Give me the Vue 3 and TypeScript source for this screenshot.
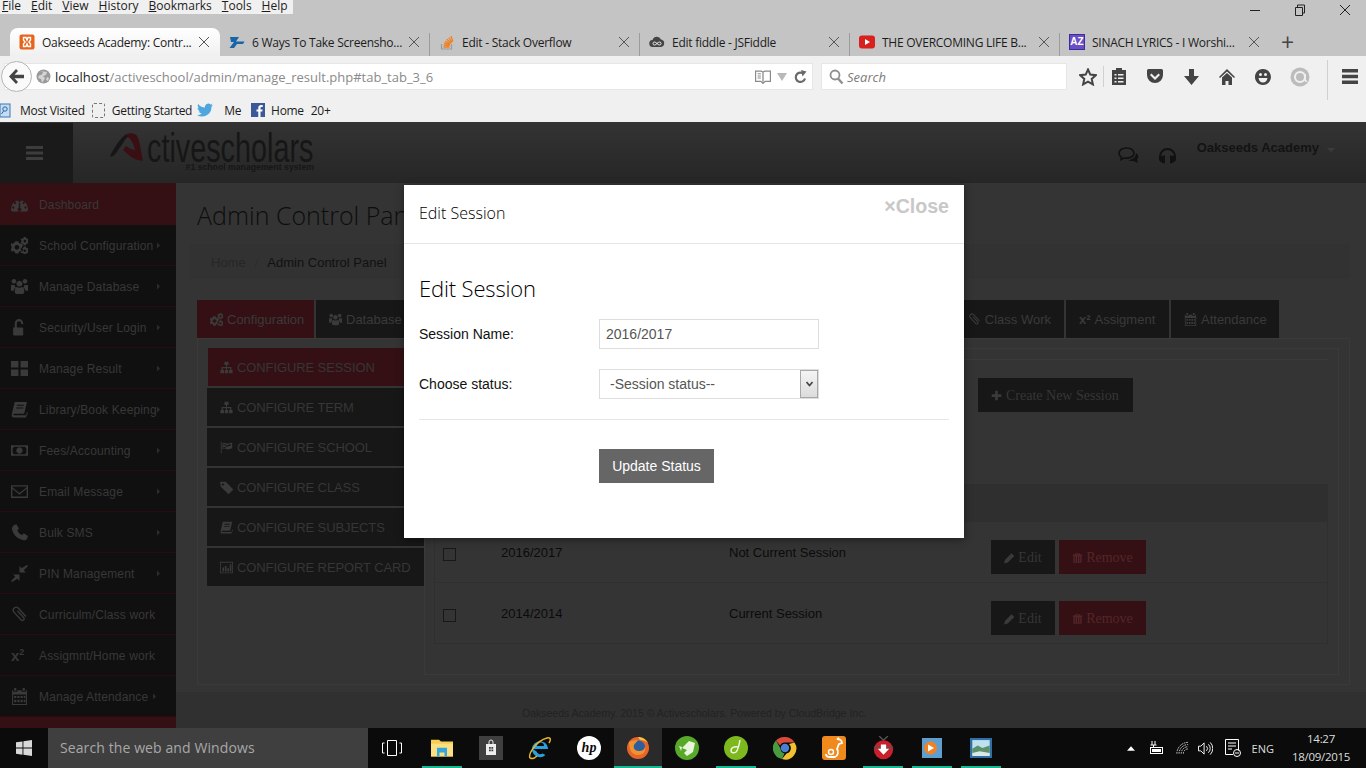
<script setup lang="ts">
const menus = ['File', 'Edit', 'View', 'History', 'Bookmarks', 'Tools', 'Help']

const tabs = [
  { id: 'xampp', title: 'Oakseeds Academy: Contr...', active: true },
  { id: 'zd', title: '6 Ways To Take Screensho...' },
  { id: 'so', title: 'Edit - Stack Overflow' },
  { id: 'fiddle', title: 'Edit fiddle - JSFiddle' },
  { id: 'yt', title: 'THE OVERCOMING LIFE B...' },
  { id: 'az', title: 'SINACH LYRICS - I Worshi...' },
]

// Font Awesome look-alikes on a 16 unit box
const icons: Record<string, string> = {
  gauge: 'M0 12a8 8 0 1 1 16 0c0 1-.3 1.500-.8 2.500H.8C.3 13.500 0 13 0 12zM3.200 10.800a1.100 1.100 0 1 0 0 .1zM5 6.600a1.100 1.100 0 1 0 0 .1zM9 5a1.100 1.100 0 1 0 0 .1zM13 6.600a1.100 1.100 0 1 0 0 .1zM14.800 10.800a1.100 1.100 0 1 0 0 .1zM7.300 6.500v4.600a1.700 1.700 0 1 0 1.400 0V6.500z',
  cogs: 'M4 4h3l.4 1.600 1.400.8 1.600-.5 1.200 2-1.200 1.100v1.600l1.200 1.100-1.200 2-1.600-.5-1.400.8L7 15.600H4l-.4-1.600-1.400-.8-1.600.5-1.200-2 1.200-1.100V9L-1.200 7.900l1.200-2 1.600.5L3 5.600zM5.500 7.600a2.200 2.200 0 1 0 .1 0zM12 0h2l.3 1.100 1 .5 1-.3.700 1.400-.8.7v1l.8.700-.7 1.400-1-.3-1 .5L14 7.800h-2l-.3-1.100-1-.5-1 .3-.7-1.400.8-.7v-1l-.8-.7.7-1.400 1 .3 1-.5zM13 2.700a1.200 1.200 0 1 0 .1 0zM12 9h2l.3 1 1 .5 1-.3.700 1.400-.8.7v1l.8.700-.7 1.400-1-.3-1 .5-.3 1h-2l-.3-1-1-.5-1 .3-.7-1.400.8-.7v-1l-.8-.7.7-1.400 1 .3 1-.5zM13 11.700a1.200 1.200 0 1 0 .1 0z',
  users: 'M8 2.500a2.800 2.800 0 1 1-.1 0zM2.800 1a2.200 2.200 0 1 1-.1 0zM13.200 1a2.200 2.200 0 1 1-.1 0zM0 6.500h3.500a4 4 0 0 0 1 2.500A4 4 0 0 0 2.500 12H0zM16 6.500h-3.500a4 4 0 0 1-1 2.500 4 4 0 0 1 2 3H16zM5.500 8.500c1.500 1 3.500 1 5 0 1.500.5 2 2 2 4.500 0 1-.5 2-2 2h-5c-1.500 0-2-1-2-2 0-2.500.5-4 2-4.500z',
  unlock: 'M2 8h1.500V4a4 4 0 0 1 8 0v1H9.500V4a2 2 0 0 0-4 0v4h5a1 1 0 0 1 1 1v5.500a1 1 0 0 1-1 1H3a1 1 0 0 1-1-1z',
  grid: 'M0 1h7v6H0zM9 1h7v6H9zM0 9h7v6H0zM9 9h7v6H9z',
  book: 'M3.500 1H15l-2.600 11H2.800c-.8 0-.8 1.500 0 1.500h11.400l.8-3 1 .5L14 15.500H2.500C1 15.500.400 14 .7 12.500zM5.500 3.500v1h6.500v-1zM5 6v1h6.500V6z',
  money: 'M0 3h16v10H0zM2.500 4.500a2 2 0 0 1-1 1.500v4a2 2 0 0 1 1 1.500h11a2 2 0 0 1 1-1.500V6a2 2 0 0 1-1-1.500zM8 5a3 3 0 1 1-.1 0z',
  mail: 'M0 2h16v12H0zM1.300 3.300v.6L8 9.300l6.700-5.400v-.6zM1.300 5.500v7.200h13.400V5.500L8 11z',
  phone: 'M3 1l2-.7 2.500 4-1.500 1.500c.5 2 2.500 4 4.500 4.500l1.500-1.500 4 2.500-.7 2C14.500 15 13 15.500 11 15 6 14 2 10 1 5 .6 3.500 1.500 2 3 1z',
  compress: 'M15 0l1 1-4 4 2 2H8V1l2 2zM1 16l-1-1 4-4-2-2h6v6l-2-2z',
  clip: 'M6 4.500L12 11a1.600 1.600 0 0 1-2.400 2.100L2.800 5.800A2.800 2.800 0 0 1 7 2.100L14 9.800',
  calendar: 'M3 0h2v2.500H3zM11 0h2v2.500h-2zM1 2h1v1.500h4V2h4v1.500h4V2h1v14H1zM2 6v9h12V6zM3 7.500h2v2H3zM6 7.500h2v2H6zM9 7.500h2v2H9zM12 7.500h1.500v2H12zM3 11h2v2.500H3zM6 11h2v2.500H6zM9 11h2v2.500H9zM12 11h1.500v2.500H12z',
  sitemap: 'M5.500 1h5v4H8.600v2.500H14V11h1.500v4h-4.500v-4h1.500V8.800H8.600V11H10v4H6v-4h1.400V8.800H3.500V11H5v4H.5v-4H2V7.500h5.400V5H5.500z',
  flag: 'M1 1h1v14H1zM3 3c3-1.500 5 1 8 0s3-1 4-.5v7c-1-.5-2 0-4 .7s-5-1.700-8-.2zM4 4v1.500c1-.3 2-.3 3 0V4zM10 5c-1 .4-2 .4-3 0v1.800c1 .4 2 .4 3 0zM4 7.500V9c1-.3 2-.3 3 0V7.500zM13.500 4c-1-.2-2 .3-3.500.7v1.800c1.500-.4 2.500-.9 3.500-.7z',
  tag: 'M0 1h7l8.500 8.500a1.400 1.400 0 0 1 0 2l-4 4a1.400 1.400 0 0 1-2 0L1 7zM3.500 3a1.300 1.300 0 1 0 .1 0z',
  chart: 'M0 1h16v14H0zM1 2v12h14V2zM3 8h2v5H3zM6 6h2v7H6zM9 9h2v4H9zM12 4h2v9h-2z',
  plus: 'M6 1h4v5h5v4h-5v5H6v-5H1V6h5z',
  pencil: 'M11 1l4 4-9.500 9.500L0 16l1.500-5.500z',
  trash: 'M5 1h6l1 2h3v1.500h-1V15H2V4.500H1V3h3zM6 3h4l-.4-.8H6.400zM4 5.500V14h1.200V5.500zM7.400 5.500V14h1.200V5.500zM10.800 5.500V14H12V5.500z',
}

const sideItems = [
  { label: 'Dashboard', icon: 'gauge', active: true },
  { label: 'School Configuration', icon: 'cogs', caret: true },
  { label: 'Manage Database', icon: 'users', caret: true },
  { label: 'Security/User Login', icon: 'unlock', caret: true },
  { label: 'Manage Result', icon: 'grid', caret: true },
  { label: 'Library/Book Keeping', icon: 'book', caret: true },
  { label: 'Fees/Accounting', icon: 'money', caret: true },
  { label: 'Email Message', icon: 'mail', caret: true },
  { label: 'Bulk SMS', icon: 'phone', caret: true },
  { label: 'PIN Management', icon: 'compress', caret: true },
  { label: 'Curriculm/Class work', icon: 'clip' },
  { label: 'Assigmnt/Home work', icon: 'sup' },
  { label: 'Manage Attendance', icon: 'calendar', caret: true, near: true },
]

const pills = [
  { label: 'CONFIGURE SESSION', icon: 'sitemap', active: true },
  { label: 'CONFIGURE TERM', icon: 'sitemap' },
  { label: 'CONFIGURE SCHOOL', icon: 'flag' },
  { label: 'CONFIGURE CLASS', icon: 'tag' },
  { label: 'CONFIGURE SUBJECTS', icon: 'book' },
  { label: 'CONFIGURE REPORT CARD', icon: 'chart' },
]

const sessions = [
  { name: '2016/2017', status: 'Not Current Session' },
  { name: '2014/2014', status: 'Current Session' },
]

const taskApps = [
  { id: 'folder', on: true },
  { id: 'store' },
  { id: 'ie' },
  { id: 'hp' },
  { id: 'firefox', on: true, current: true },
  { id: 'evernote' },
  { id: 'dw', on: true },
  { id: 'chrome' },
  { id: 'uc' },
  { id: 'ball', on: true },
  { id: 'player', on: true },
  { id: 'photo', on: true },
]
</script>

<template>
  <div class="screen">
    <!-- browser chrome -->
    <header class="browser">
      <div class="titlebar">
        <div class="menus">
          <span v-for="m in menus" :key="m">{{ m }}</span>
        </div>
        <div class="win-btns">
          <svg width="12" height="12" viewBox="0 0 12 12"><path d="M1 6.500h10" stroke="#222" /></svg>
          <svg width="12" height="12" viewBox="0 0 12 12"><path d="M1.500 3.500h7v8h-7zM3.500 3.500v-2.500h7v8h-2" fill="none" stroke="#222" /></svg>
          <svg width="12" height="12" viewBox="0 0 12 12"><path d="M1 1l10 10M11 1L1 11" stroke="#222" /></svg>
        </div>
      </div>
      <div class="tabstrip">
        <div v-for="t in tabs" :key="t.id" class="tab" :class="{ 'tab-active': t.active }">
          <svg v-if="t.id === 'xampp'" class="fav" viewBox="0 0 16 16">
            <rect x="0.500" y="0.500" width="15" height="15" rx="2" fill="#e8641b" />
            <path d="M4.500 3.500h2.500l1 2.500 1-2.500h2.500v2.500L10 8l1.500 2v2.500H9l-1-2.500-1 2.500H4.500V10L6 8 4.500 6z" fill="none" stroke="#fff" stroke-width="1.400" />
          </svg>
          <svg v-else-if="t.id === 'zd'" class="fav" viewBox="0 0 16 16">
            <path d="M1 3h9L7 7.500h8.500L14 10H8l-3 4H.5L5 8H2z" fill="#1565a8" />
          </svg>
          <svg v-else-if="t.id === 'so'" class="fav" viewBox="0 0 16 16">
            <path d="M2.500 10v5h10v-5" fill="none" stroke="#9b9b9b" stroke-width="1.200" />
            <path d="M4.500 13h6M4.700 11l6 .6M5.200 9l5.800 1.500M6.200 7l5.200 2.800M7.700 5.200l4.500 3.800M9.700 3.500l3.300 4.800M12 2l1.800 5.500" stroke="#f08020" stroke-width="1.300" />
          </svg>
          <svg v-else-if="t.id === 'fiddle'" class="fav" viewBox="0 0 16 16">
            <path d="M4 13a3.500 3.500 0 0 1-.5-7A4.500 4.500 0 0 1 12 5.500 3.800 3.800 0 0 1 12 13z" fill="#444" />
            <path d="M5.500 8a1.500 1.500 0 1 0 0 3c2 0 3-3 5-3a1.500 1.500 0 1 1 0 3c-2 0-3-3-5-3z" fill="none" stroke="#eee" />
          </svg>
          <svg v-else-if="t.id === 'yt'" class="fav" viewBox="0 0 16 16">
            <rect x="0" y="1.500" width="16" height="13" rx="3" fill="#d8201f" />
            <path d="M6 5l5 3-5 3z" fill="#fff" />
          </svg>
          <span v-else class="fav fav-az">AZ</span>
          <span class="tab-title">{{ t.title }}</span>
          <svg class="tab-x" viewBox="0 0 12 12"><path d="M1 1l10 10M11 1L1 11" stroke="#555" /></svg>
        </div>
        <span class="new-tab">+</span>
      </div>
      <div class="navbar">
        <span class="back">
          <svg width="17" height="15" viewBox="0 0 17 15"><path d="M8 0L1 7.500 8 15l2-2-3.500-3.700H16V5.700H6.500L10 2z" fill="#444" /></svg>
        </span>
        <div class="urlbar">
          <svg class="globe" width="15" height="15" viewBox="0 0 15 15">
            <circle cx="7.500" cy="7.500" r="7" fill="#9a9a9a" />
            <path d="M4 2l3 1-1 2.500-3 1L2 9l3 1 1 4 2-3 1-2-2-2 3-1 1-3zM11 8l2 1-1 3-2-1z" fill="#d4d4d4" />
          </svg>
          <span class="url"><b>localhost</b>/activeschool/admin/manage_result.php#tab_tab_3_6</span>
          <svg width="16" height="14" viewBox="0 0 15 13" class="reader">
            <path d="M.5 1h5.500l1.500 1L9 1h5.500v9.500H9.500l-2 2-2-2H.5zM7.500 2v9" fill="none" stroke="#8a8a8a" stroke-width="1.200" />
            <path d="M2.500 3.500h3M2.500 5.500h3M2.500 7.500h3" stroke="#8a8a8a" />
          </svg>
          <svg width="10" height="8" viewBox="0 0 10 8" class="drop"><path d="M0 0h10L5 8z" fill="#b9b9b9" /></svg>
          <svg width="13" height="14" viewBox="0 0 13 14" class="reload">
            <path d="M11 8.500A4.700 4.700 0 1 1 8.500 3" fill="none" stroke="#6a6a6a" stroke-width="2.200" />
            <path d="M7 0l5.500 1.500L8.500 6.500z" fill="#6a6a6a" />
          </svg>
        </div>
        <div class="searchbar">
          <svg width="15" height="16" viewBox="0 0 15 16"><circle cx="6" cy="6" r="4.500" fill="none" stroke="#8e8e8e" stroke-width="1.800" /><path d="M9 9.500l4.500 5" stroke="#8e8e8e" stroke-width="2.400" /></svg>
          <span>Search</span>
        </div>
        <div class="tools">
          <svg class="t-star" width="18" height="18" viewBox="0 0 18 18"><path d="M9 1.500l2.300 5.100 5.500.6-4.100 3.700 1.200 5.500L9 13.600l-4.900 2.800 1.200-5.500L1.200 7.200l5.500-.6z" fill="none" stroke="#444" stroke-width="2" /></svg>
          <i class="t-sep" />
          <svg class="t-clip" width="14" height="17" viewBox="0 0 14 17"><path d="M0 2h4V0h6v2h4v15H0zM2.500 6v1.500h2V6zM6 6v1.500h5.500V6zM2.500 9.500V11h2V9.500zM6 9.500V11h5.500V9.500zM2.500 13v1.500h2V13zM6 13v1.500h5.500V13z" fill="#444" fill-rule="evenodd" /></svg>
          <svg class="t-pocket" width="16" height="15" viewBox="0 0 16 15"><path d="M1.500 0h13A1.500 1.500 0 0 1 16 1.500V6A8 8 0 0 1 0 6V1.500A1.500 1.500 0 0 1 1.500 0zM4.500 4.500L3 6l5 5 5-5-1.500-1.500L8 8z" fill="#444" fill-rule="evenodd" /></svg>
          <svg class="t-down" width="15" height="16" viewBox="0 0 15 16"><path d="M5 0h5v7h5l-7.500 9L0 7h5z" fill="#444" /></svg>
          <svg class="t-home" width="16" height="16" viewBox="0 0 16 16"><path d="M8 0l8 8-1 1-7-6.500L1 9 0 8zM3 8.500l5-4.500 5 4.500V16H9.500v-4h-3v4H3z" fill="#444" /></svg>
          <svg class="t-smile" width="16" height="16" viewBox="0 0 16 16"><path d="M8 0a8 8 0 1 1-.1 0zM4 5.500a1.500 1.500 0 1 0 3 0 1.500 1.500 0 1 0-3 0zM9 5.500a1.500 1.500 0 1 0 3 0 1.500 1.500 0 1 0-3 0zM3.500 9c.5 3 2.300 4.500 4.500 4.500S12 12 12.500 9z" fill="#444" fill-rule="evenodd" /></svg>
          <svg class="t-at" width="20" height="20" viewBox="0 0 20 20"><circle cx="10" cy="10" r="9.500" fill="#bcbcbc" /><circle cx="10" cy="10" r="5" fill="none" stroke="#f0f0f0" stroke-width="2" /><path d="M15 7v5c0 2 1 2.500 2 2" fill="none" stroke="#f0f0f0" stroke-width="1.600" /></svg>
          <i class="t-sep t-sep-tall" />
          <svg class="t-menu" width="16" height="15" viewBox="0 0 16 15"><path d="M0 0h16v3.500H0zM0 5.700h16v3.500H0zM0 11.400h16v3.500H0z" fill="#444" /></svg>
        </div>
      </div>
      <div class="bookmarks">
        <svg class="bm-first" width="11" height="15" viewBox="0 0 11 15"><rect x="0" y="1" width="10" height="13" fill="#c6dcf2" stroke="#3a78b5" /><circle cx="5" cy="6" r="2.200" fill="none" stroke="#2a68a5" /><path d="M3.500 8l-2 3" stroke="#2a68a5" /></svg>
        <span class="bm-text">Most Visited</span>
        <span class="dashed" />
        <span class="bm-text">Getting Started</span>
        <svg class="bird" width="16" height="14" viewBox="0 0 16 14"><path d="M16 2l-1.900.5L15.500.6 13.600 1.500A3.300 3.300 0 0 0 8 4.500C5 4.300 2.800 3 1.200.9.300 2.500.800 4.300 2 5.300L.6 4.900c0 1.600 1 2.900 2.600 3.300H1.800c.4 1.300 1.600 2.200 3 2.300A6.600 6.600 0 0 1 0 12a9.500 9.500 0 0 0 14.500-8.300z" fill="#4da7de" /></svg>
        <span class="bm-text bm-me">Me</span>
        <svg class="fb" width="14" height="14" viewBox="0 0 14 14"><rect width="14" height="14" fill="#3b5998" /><path d="M9.500 14V8.500h1.800l.3-2.100H9.500V5c0-.6.200-1 1-1h1.200V2.100C11.300 2 10.800 2 10.200 2 8.500 2 7.300 3 7.300 4.800v1.600H5.500v2.100h1.800V14z" fill="#fff" /></svg>
        <span class="bm-text bm-home">Home</span>
        <span class="bm-text bm-more">20+</span>
      </div>
    </header>

    <!-- dimmed page -->
    <div class="page">
      <div class="topbar">
        <div class="burger">
          <svg width="17" height="14" viewBox="0 0 17 14"><path d="M0 0h17v3H0zM0 5.500h17v3H0zM0 11h17v3H0z" fill="#3d3d3d" /></svg>
        </div>
        <div class="logo">
          <svg class="logo-a" width="37" height="30" viewBox="0 0 37 30">
            <path d="M0 23C4 15 10 6 15 2c2-1 5-1.500 8-1.500-5 2-8 6-10 9.500L6 20c-2 3-4 4-6 3z" fill="#161616" />
            <path d="M15 2c5-2 10-2 12 1 2 3 3 8 4 15l2 10c-3-.5-7-1-10-3-4-2-7-6-10-8l3-4c3 2 6 4 9 4-1-6-4-12-10-15z" fill="#3a0f13" />
          </svg>
          <div class="logo-text">
            <span class="logo-name">ctivescholars</span>
            <span class="logo-sub">#1 school management system</span>
          </div>
        </div>
        <div class="top-right">
          <svg class="top-chat" width="22" height="17" viewBox="0 0 22 17"><path d="M8.500 1C4 1 1 3.300 1 6.200c0 1.700 1 3 2.500 4L3 12.500l3-1.500c4.500.7 10-1 10-4.800C16 3.300 13 1 8.500 1z" fill="none" stroke="#111" stroke-width="1.600" /><path d="M18 6c2.500 1.500 3 4.500 1 6.500l1 3.500-4.500-2c-2 .4-4 0-5.500-1 3.500 0 8-2 8-7z" fill="#111" /></svg>
          <svg class="top-head" width="19" height="17" viewBox="0 0 19 17"><path d="M2 12V9.500a7.500 7.500 0 0 1 15 0V12" fill="none" stroke="#111" stroke-width="2" /><path d="M7 8.500v8C4 16 1 14.500 1 12s3-3.500 6-3.500zM12 8.500v8c3-.5 6-2 6-4.500s-3-3.500-6-3.500z" fill="#111" /></svg>
          <span class="top-user">Oakseeds Academy</span>
          <svg class="top-caret" width="8" height="4" viewBox="0 0 8 4"><path d="M0 0h8L4 4z" fill="#3c3c3c" /></svg>
        </div>
      </div>

      <div class="page-body">
        <aside class="sidebar">
          <div v-for="item in sideItems" :key="item.label" class="side-item" :class="{ 'side-active': item.active }">
            <span v-if="item.icon === 'sup'" class="side-icon side-sup">x<sup>2</sup></span>
            <svg v-else class="side-icon" viewBox="0 0 16 16"><path :class="{ line: item.icon === 'clip' }" :d="icons[item.icon]" fill-rule="evenodd" /></svg>
            <span class="side-label">{{ item.label }}</span>
            <svg v-if="item.caret" class="side-caret" :class="{ 'caret-near': item.near }" viewBox="0 0 4 8"><path d="M0 0l4 4-4 4z" /></svg>
          </div>
          <div class="side-end" />
        </aside>

        <main class="content">
          <h1 class="page-title">Admin Control Panel</h1>
          <div class="crumbs">
            <span class="crumb-home">Home</span>
            <span class="crumb-sep">/</span>
            <span class="crumb-now">Admin Control Panel</span>
          </div>

          <div class="tabs-row">
            <div class="ptab ptab-active" style="width: 117px">
              <svg viewBox="0 0 16 16"><path :d="icons.cogs" fill-rule="evenodd" /></svg>Configuration
            </div>
            <div class="ptab" style="width: 584px">
              <svg viewBox="0 0 16 16"><path :d="icons.users" fill-rule="evenodd" /></svg>Database
            </div>
            <div class="ptab ptab-work" style="width: 162px">
              <svg viewBox="0 0 16 16"><path class="line" :d="icons.clip" /></svg>Class Work
            </div>
            <div class="ptab" style="width: 103px"><b class="ptab-sup">x²</b>Assigment</div>
            <div class="ptab" style="width: 108px">
              <svg viewBox="0 0 16 16"><path :d="icons.calendar" fill-rule="evenodd" /></svg>Attendance
            </div>
          </div>

          <section class="panel">
            <nav class="pills">
              <div v-for="p in pills" :key="p.label" class="pill" :class="{ 'pill-active': p.active }">
                <svg viewBox="0 0 16 16"><path :d="icons[p.icon]" fill-rule="evenodd" /></svg>
                <span>{{ p.label }}</span>
              </div>
            </nav>
            <div class="pane">
              <div class="pane-rule" />
              <button class="create-btn">
                <svg viewBox="0 0 16 16"><path :d="icons.plus" /></svg>Create New Session
              </button>
              <div class="sess-table">
                <div class="sess-head" />
                <div v-for="s in sessions" :key="s.name" class="sess-row">
                  <span class="check" />
                  <span>{{ s.name }}</span>
                  <span>{{ s.status }}</span>
                  <div class="row-btns">
                    <button class="mini-btn">
                      <svg viewBox="0 0 16 16"><path :d="icons.pencil" /></svg>Edit
                    </button>
                    <button class="mini-btn mini-red">
                      <svg viewBox="0 0 16 16"><path :d="icons.trash" fill-rule="evenodd" /></svg>Remove
                    </button>
                  </div>
                </div>
              </div>
            </div>
          </section>

          <footer class="page-foot">Oakseeds Academy. 2015 © Activescholars. Powered by CloudBridge Inc.</footer>
        </main>
      </div>

      <!-- modal -->
      <div class="modal">
        <div class="modal-head">
          <span class="modal-title">Edit Session</span>
          <span class="modal-close">×Close</span>
        </div>
        <div class="modal-body">
          <h2>Edit Session</h2>
          <div class="field">
            <label>Session Name:</label>
            <input type="text" value="2016/2017" />
          </div>
          <div class="field field-select">
            <label>Choose status:</label>
            <div class="select-wrap">
              <select>
                <option>-Session status--</option>
              </select>
              <span class="select-arrow">
                <svg width="7" height="6" viewBox="0 0 7 6"><path d="M.5 1l3 3.500 3-3.500" fill="none" stroke="#444" stroke-width="1.600" /></svg>
              </span>
            </div>
          </div>
          <hr />
          <button class="update-btn">Update Status</button>
        </div>
      </div>
    </div>

    <!-- windows taskbar -->
    <div class="taskbar">
      <div class="start">
        <svg width="16" height="16" viewBox="0 0 16 16"><path d="M0 2.300l6.500-.9v6.200H0zM7.400 1.300L16 0v7.600H7.400zM0 8.500h6.500v6.200L0 13.800zM7.400 8.500H16V16l-8.600-1.300z" fill="#d8d8d8" /></svg>
      </div>
      <div class="cortana">Search the web and Windows</div>
      <div class="taskview">
        <svg width="20" height="16" viewBox="0 0 20 16"><path d="M5.500 .5h9v15h-9zM2.500 3H.5v10h2M17.500 3h2v10h-2" fill="none" stroke="#fff" /></svg>
      </div>
      <div class="apps">
        <div v-for="a in taskApps" :key="a.id" class="app" :class="{ 'app-on': a.on, 'app-current': a.current }">
          <svg v-if="a.id === 'folder'" width="22" height="19" viewBox="0 0 22 24" preserveAspectRatio="none">
            <path d="M0 1h8l2 2h12v19H0z" fill="#f6cf52" />
            <path d="M0 6h22v16H0z" fill="#fbe083" />
            <path d="M6 11h10v11h-2.500v-5h-5v5H6z" fill="#33a7dc" />
          </svg>
          <svg v-else-if="a.id === 'store'" width="24" height="24" viewBox="0 0 24 24">
            <rect width="24" height="24" fill="#3f3f3f" />
            <path d="M7 8h10v11H7z" fill="#eee" />
            <path d="M10 8V6a2 2 0 0 1 4 0v2" fill="none" stroke="#eee" />
            <path d="M10 11h1.800v1.800H10zM12.400 11h1.800v1.800h-1.800zM10 13.400h1.800v1.800H10zM12.400 13.400h1.800v1.800h-1.800z" fill="#3f3f3f" />
          </svg>
          <svg v-else-if="a.id === 'ie'" width="24" height="24" viewBox="0 0 24 24">
            <path d="M5 13h15a8 8 0 1 0-2.500 6l-3-1.500a4 4 0 0 1-6-2M9 10a3.500 3.500 0 0 1 7 0z" fill="#2ba0dc" fill-rule="evenodd" />
            <path d="M2 22C0 18 8 5 19 2c4-1 4 2 2 5M2 22c2 1 5 0 7-2" fill="none" stroke="#e8b52a" stroke-width="1.500" />
          </svg>
          <span v-else-if="a.id === 'hp'" class="hp">hp</span>
          <svg v-else-if="a.id === 'firefox'" width="24" height="24" viewBox="0 0 24 24">
            <circle cx="12" cy="12" r="11" fill="#e8642a" />
            <circle cx="12.500" cy="11" r="6.500" fill="#2c5f9e" />
            <path d="M3 6c0 6 2 13 9 13 6 0 8-4 7-8-1 3-3 4-6 4-4 0-6-3-5-6 1-2 3-3 4-5-4 0-7 1-9 2z" fill="#f0922f" />
            <path d="M12 1c4 0 8 2 10 6-2-2-5-3-8-3z" fill="#f6c23e" />
          </svg>
          <svg v-else-if="a.id === 'evernote'" width="24" height="24" viewBox="0 0 24 24">
            <circle cx="12" cy="12" r="12" fill="#58a829" />
            <path d="M14 5l6 2-2 9-6 4-3-3 3-3-5-2 3-3z" fill="#e8f5dc" />
            <path d="M4 10l3 1-1 4z" fill="#e8f5dc" />
          </svg>
          <svg v-else-if="a.id === 'dw'" width="24" height="24" viewBox="0 0 24 24">
            <ellipse cx="12" cy="12" rx="12" ry="12" fill="#7db81e" />
            <path d="M16 4c-1 6-2 10-4 12-2 1.500-5 1-5-1.500S10 10 14.500 11" fill="none" stroke="#f1f8df" stroke-width="1.500" />
          </svg>
          <svg v-else-if="a.id === 'chrome'" width="24" height="24" viewBox="0 0 24 24">
            <path d="M12 1a11 11 0 0 1 9.500 5.500H12a5.500 5.500 0 0 0-5 3L3 4.500A11 11 0 0 1 12 1z" fill="#d94a3a" />
            <path d="M3 4.500l4.500 8a5.500 5.500 0 0 0 4 5L9 23A11 11 0 0 1 3 4.500z" fill="#4a9b3f" />
            <path d="M21.500 6.500A11 11 0 0 1 9 23l4.500-5.500A5.500 5.500 0 0 0 16 8z" fill="#f2c132" />
            <circle cx="12" cy="12" r="4.200" fill="#4a80d4" />
          </svg>
          <svg v-else-if="a.id === 'uc'" width="24" height="24" viewBox="0 0 24 24">
            <rect width="24" height="24" rx="3" fill="#f08a1c" />
            <path d="M15 3c3 0 5 2 5 4l-3 1-2 5c2 2 1 7-2 8H8c-2 0-4-1-4-3" fill="none" stroke="#fff" stroke-width="1.800" />
            <circle cx="9" cy="16" r="2.500" fill="none" stroke="#fff" stroke-width="1.400" />
            <path d="M14 3l3-2v3z" fill="#fff" />
          </svg>
          <svg v-else-if="a.id === 'ball'" width="21" height="24" viewBox="0 0 24 28" preserveAspectRatio="none">
            <path d="M7 0l5 5 5-5" fill="none" stroke="#555" stroke-width="1.500" />
            <circle cx="12" cy="16" r="11" fill="#c9202c" />
            <path d="M1 12h22v3H1z" fill="#555" opacity=".6" />
            <path d="M9 10h6v5h3.500L12 22l-6.500-7H9z" fill="#fff" />
          </svg>
          <svg v-else-if="a.id === 'player'" width="20" height="20" viewBox="0 0 20 20">
            <rect width="20" height="20" fill="#5e9fd0" />
            <circle cx="8.500" cy="10" r="6.500" fill="#f08225" />
            <path d="M6 6.500l6 3.500-6 3.500z" fill="#fff" />
          </svg>
          <svg v-else width="22" height="20" viewBox="0 0 24 24" preserveAspectRatio="none">
            <rect width="24" height="24" fill="#2f6ea6" />
            <rect x="2.500" y="2.500" width="19" height="19" fill="#bfe0ee" />
            <path d="M2.500 13l6-4 5 3 8-3v12.500h-19z" fill="#5c8f6a" />
            <path d="M2.500 18l8-2 11 2v3.500h-19z" fill="#d7e8e6" />
          </svg>
        </div>
      </div>
      <div class="tray">
        <svg class="tray-up" width="8" height="5" viewBox="0 0 9 5"><path d="M4.500 0L9 5H0z" fill="#fff" /></svg>
        <svg class="tray-batt" width="15" height="14" viewBox="0 0 15 14"><path d="M3 0v4M6 0v4M1.500 4h6M4.500 4v3" stroke="#fff" /><rect x="1.500" y="6.500" width="12" height="6" fill="none" stroke="#fff" /><rect x="3" y="8" width="9" height="3" fill="#fff" /></svg>
        <svg class="tray-wifi" width="13" height="14" viewBox="0 0 15 15"><path d="M1 14a13 13 0 0 1 13-13M3.500 14A10.500 10.500 0 0 1 14 3.500M6 14a8 8 0 0 1 8-8M8.500 14A5.500 5.500 0 0 1 14 8.500" fill="none" stroke="#ddd" stroke-dasharray="2 1" /></svg>
        <svg class="tray-vol" width="15" height="15" viewBox="0 0 16 15"><path d="M.5 5h2.500L6.500 1.500v12L3 10H.5z" fill="none" stroke="#fff" /><path d="M9 5a3.500 3.500 0 0 1 0 5M11 3a6 6 0 0 1 0 9M13 1a9 9 0 0 1 0 13" fill="none" stroke="#fff" /></svg>
        <svg class="tray-note" width="16" height="18" viewBox="0 0 16 18"><path d="M.5.500h13v11M8 15.500H.5V.5M3 4h8M3 7h8M3 10h4" fill="none" stroke="#fff" /><circle cx="12" cy="14" r="3.500" fill="none" stroke="#fff" /><path d="M10 14h4" stroke="#fff" /></svg>
        <span class="tray-lang">ENG</span>
        <div class="clock">
          <span>14:27</span>
          <span>18/09/2015</span>
        </div>
      </div>
    </div>
  </div>
</template>

<style scoped>
.screen {
  width: 1366px;
  height: 768px;
  overflow: hidden;
  display: flex;
  flex-direction: column;
  font-family: 'Liberation Sans', Arial, sans-serif;
}

/* browser */
.browser {
  height: 123px;
  flex: none;
  background: #c4c4c4;
  font-family: 'Open Sans', 'Noto Sans', sans-serif;
  color: #1c1c1c;
  border-bottom: 1px solid #333;
  box-sizing: border-box;
}
.titlebar {
  height: 28px;
  display: flex;
  justify-content: space-between;
}
.menus {
  height: 14px;
  width: 293px;
  background: #f0f0f0;
  display: flex;
  gap: 10px;
  padding-left: 2px;
  box-sizing: border-box;
  font-size: 12px;
  line-height: 11px;
  overflow: hidden;
}
.menus span::first-letter {
  text-decoration: underline;
}
.win-btns {
  display: flex;
  gap: 33px;
  padding: 4px 15px 0 0;
}
.tabstrip {
  height: 28px;
  display: flex;
  align-items: center;
  padding-left: 10px;
}
.tab {
  width: 210px;
  height: 28px;
  box-sizing: border-box;
  display: flex;
  align-items: center;
  padding: 0 10px 0 9px;
  font-size: 12px;
  position: relative;
}
.tab + .tab::before {
  content: '';
  position: absolute;
  left: -1px;
  top: 5px;
  height: 23px;
  width: 1px;
  background: #9c9c9c;
}
.tab:nth-child(2)::before {
  display: none;
}
.tab-active {
  background: linear-gradient(#fff, #f0f0f0);
  border-radius: 8px 8px 0 0;
}
.fav {
  width: 16px;
  height: 16px;
  flex: none;
  margin-right: 7px;
}
.fav-az {
  background: #6a4fc4;
  border: 1px solid #3d2aa0;
  box-sizing: border-box;
  color: #fff;
  font: bold 10px/14px 'Liberation Sans', sans-serif;
  text-align: center;
}
.tab-title {
  flex: 1;
  white-space: nowrap;
  overflow: hidden;
  letter-spacing: -0.25px;
}
.tab-x {
  width: 12px;
  height: 12px;
  flex: none;
}
.new-tab {
  margin-left: 11px;
  font-size: 23px;
  line-height: 28px;
  color: #444;
}
.navbar {
  height: 41px;
  background: #f0f0f0;
  position: relative;
  display: flex;
  align-items: center;
  padding-left: 4px;
  box-sizing: border-box;
}
.back {
  position: absolute;
  left: 1px;
  top: 5px;
  width: 29px;
  height: 29px;
  border: 1px solid #b5b5b5;
  border-radius: 50%;
  background: #fafafa;
  display: flex;
  align-items: center;
  justify-content: center;
  z-index: 1;
}
.urlbar,
.searchbar {
  height: 27px;
  box-sizing: border-box;
  background: #fff;
  border: 1px solid #e6e6e6;
  display: flex;
  align-items: center;
}
.urlbar {
  width: 809px;
  padding-left: 31px;
  font-size: 13px;
}
.globe {
  flex: none;
  margin-right: 4px;
}
.url {
  flex: 1;
  color: #8a8a8a;
}
.url b {
  font-weight: 400;
  color: #222;
}
.reader {
  margin-right: 6px;
}
.drop {
  margin-right: 7px;
}
.reload {
  margin-right: 5px;
}
.searchbar {
  width: 246px;
  margin-left: 8px;
  padding-left: 7px;
  gap: 3px;
  font-size: 13px;
  font-style: italic;
  color: #7c7c7c;
}
.tools {
  position: relative;
  flex: 1;
  height: 100%;
  display: flex;
  align-items: center;
}
.tools svg {
  flex: none;
}
.t-star { margin-left: 12px; }
.t-sep {
  display: block;
  width: 1px;
  height: 21px;
  background: #d0d0d0;
  margin-left: 6px;
}
.t-clip { margin-left: 8px; }
.t-pocket { margin-left: 21px; }
.t-down { margin-left: 21px; }
.t-home { margin-left: 20px; }
.t-smile { margin-left: 20px; }
.t-at { margin-left: 19px; }
.t-sep-tall {
  height: 40px;
  margin-left: 17px;
  margin-top: 6px;
}
.t-menu { margin-left: 14px; }
.bookmarks {
  height: 25px;
  background: #f0f0f0;
  display: flex;
  align-items: center;
  font-size: 12px;
  box-sizing: border-box;
  padding-top: 1px;
}
.bm-text {
  white-space: nowrap;
  letter-spacing: -0.3px;
}
.bm-first { margin-right: 9px; }
.dashed {
  width: 11px;
  height: 13px;
  border: 1px dashed #777;
  border-radius: 2px;
  margin: 0 7px 0 7px;
}
.bird { margin-left: 5px; }
.bm-me { margin-left: 11px; }
.fb { margin-left: 10px; }
.bm-home { margin-left: 6px; }
.bm-more { margin-left: 7px; }

/* dimmed page */
.page {
  position: relative;
  flex: 1;
  min-height: 0;
  display: flex;
  flex-direction: column;
  background: #343434;
}
.topbar {
  height: 60px;
  flex: none;
  display: flex;
  align-items: stretch;
  background: linear-gradient(#333333, #262626);
}
.burger {
  width: 73px;
  background: #1a1a1a;
  display: flex;
  align-items: center;
  justify-content: center;
  padding-right: 4px;
  box-sizing: border-box;
}
.logo {
  display: flex;
  margin-left: 37px;
  padding-top: 10px;
}
.logo-text {
  width: 167px;
  display: flex;
  flex-direction: column;
  align-items: flex-end;
}
.logo-name {
  align-self: flex-start;
  font: 40px/30px 'Liberation Sans', sans-serif;
  color: #161616;
  transform: scaleX(0.72);
  transform-origin: left;
  white-space: nowrap;
}
.logo-sub {
  font-size: 8.700px;
  font-weight: 700;
  line-height: 9px;
  color: #161616;
}
.top-right {
  margin-left: auto;
  display: flex;
  align-items: flex-start;
  padding-right: 31px;
}
.top-chat { margin-top: 24px; }
.top-head { margin: 24px 0 0 18px; }
.top-user {
  margin: 17px 0 0 20px;
  font-size: 13px;
  font-weight: 700;
  color: #131313;
  line-height: 16px;
}
.top-caret { margin: 25px 0 0 8px; }
.page-body {
  flex: 1;
  min-height: 0;
  display: flex;
}
.sidebar {
  width: 176px;
  flex: none;
  background: #101010;
  display: flex;
  flex-direction: column;
}
.side-item {
  height: 41px;
  flex: none;
  box-sizing: border-box;
  display: flex;
  align-items: center;
  padding: 2px 0 0 11px;
  border-bottom: 1px solid #2a0c10;
  color: #383838;
  font-size: 12px;
  letter-spacing: 0.15px;
  position: relative;
}
.side-active {
  height: 42px;
  background: #341014;
  border-bottom: 0;
}
.side-icon {
  width: 17px;
  height: 17px;
  flex: none;
  fill: #3a3a3a;
  margin: -2px 11px 0 0;
}
.side-sup {
  font-size: 15px;
  font-weight: 700;
  line-height: 17px;
  letter-spacing: 0;
}
.side-sup sup {
  font-size: 9px;
  line-height: 0;
}
.side-label {
  white-space: nowrap;
}
.side-caret {
  position: absolute;
  left: 157px;
  top: 17px;
  width: 3px;
  height: 7px;
  fill: #2c2c2c;
}
.caret-near {
  left: 153px;
}
.line {
  fill: none;
  stroke: #3a3a3a;
  stroke-width: 1.300;
}
.side-end {
  flex: 1;
  background: #341014;
}
.content {
  flex: 1;
  min-width: 0;
  box-sizing: border-box;
  padding: 16px 16px 0 21px;
  display: flex;
  flex-direction: column;
}
.page-title {
  margin: 0;
  height: 33px;
  font-family: 'Open Sans', sans-serif;
  font-weight: 300;
  font-size: 25px;
  line-height: 33px;
  color: #0d0d0d;
  white-space: nowrap;
}
.crumbs {
  height: 35px;
  flex: none;
  margin: 12px 0 0 -7px;
  padding: 1px 0 0 21px;
  box-sizing: border-box;
  background: #323232;
  display: flex;
  align-items: center;
  font-size: 13px;
  color: #111;
}
.crumb-home { color: #262626; }
.crumb-sep {
  margin: 0 9px;
  color: #2c2c2c;
}
.tabs-row {
  margin-top: 21px;
  height: 38px;
  flex: none;
  display: flex;
  gap: 2px;
}
.ptab {
  height: 38px;
  flex: none;
  box-sizing: border-box;
  background: #171717;
  color: #3a3a3a;
  font-size: 13px;
  display: flex;
  align-items: center;
  padding-left: 13px;
  white-space: nowrap;
}
.ptab svg {
  width: 13px;
  height: 13px;
  fill: #3a3a3a;
  margin-right: 4px;
  flex: none;
}
.ptab-active {
  background: #341014;
}
.ptab-sup {
  margin-right: 4px;
}
.ptab-work {
  padding-left: 0;
  justify-content: flex-end;
  padding-right: 13px;
}
.panel {
  height: 347px;
  flex: none;
  box-sizing: border-box;
  border: 1px solid #3a3a3a;
  display: flex;
  padding-top: 9px;
}
.pills {
  width: 217px;
  margin-left: 9px;
  flex: none;
  display: flex;
  flex-direction: column;
  gap: 2px;
}
.pill {
  height: 38px;
  flex: none;
  background: #171717;
  display: flex;
  align-items: center;
  padding-left: 13px;
  color: #363636;
  font-size: 13px;
  letter-spacing: -0.1px;
  white-space: nowrap;
  box-sizing: border-box;
}
.pill svg {
  width: 13px;
  height: 13px;
  fill: #3a3a3a;
  margin-right: 4px;
  flex: none;
}
.pill-active {
  background: #341014;
  margin-left: 1px;
  padding-left: 12px;
}
.pane {
  width: 915px;
  height: 327px;
  flex: none;
  box-sizing: border-box;
  border: 1px solid #3a3a3a;
  padding: 10px 10px 0 9px;
}
.pane-rule {
  height: 1px;
  background: #3a3a3a;
}
.create-btn {
  display: flex;
  align-items: center;
  margin: 18px 0 0 544px;
  height: 34px;
  width: 155px;
  border: 0;
  padding: 1px 0 0 13px;
  background: #171717;
  color: #363636;
  font: 14px 'Liberation Serif', serif;
  white-space: nowrap;
}
.create-btn svg {
  width: 11px;
  height: 11px;
  fill: #3a3a3a;
  margin-right: 4px;
}
.sess-table {
  margin-top: 72px;
  border: 1px solid #2f2f2f;
  border-top: 0;
}
.sess-head {
  height: 38px;
  background: #2f2f2f;
}
.sess-row {
  display: grid;
  grid-template-columns: 66px 228px 262px 1fr;
  height: 60px;
  box-sizing: border-box;
  padding-top: 18px;
  font-size: 13px;
  line-height: 26px;
  color: #0b0b0b;
}
.sess-head + .sess-row {
  height: 61px;
  border-bottom: 1px solid #2f2f2f;
}
.check {
  width: 13px;
  height: 13px;
  border: 1px solid #181818;
  margin: 8px 0 0 8px;
  box-sizing: border-box;
}
.row-btns {
  display: flex;
  gap: 4px;
}
.mini-btn {
  display: flex;
  align-items: center;
  justify-content: center;
  height: 34px;
  width: 64px;
  border: 0;
  padding: 1px 0 0;
  background: #171717;
  color: #363636;
  font: 14px 'Liberation Serif', serif;
}
.mini-btn svg {
  width: 11px;
  height: 12px;
  fill: #3a3a3a;
  margin-right: 3px;
}
.mini-red {
  width: 87px;
  background: #341014;
  color: #542629;
}
.mini-red svg {
  fill: #542629;
}
.page-foot {
  flex: 1;
  margin: 7px -16px 0 -21px;
  background: #303030;
  padding: 14px 0 0 346px;
  font-size: 10.500px;
  line-height: 14px;
  color: #222;
  white-space: nowrap;
}

/* modal */
.modal {
  position: absolute;
  left: 404px;
  top: 62px;
  width: 560px;
  height: 353px;
  background: #fff;
  color: #111;
  box-shadow: 0 2px 8px rgba(0, 0, 0, 0.4);
}
.modal-head {
  height: 59px;
  box-sizing: border-box;
  border-bottom: 1px solid #e5e5e5;
  padding: 0 15px;
  display: flex;
  justify-content: space-between;
}
.modal-title {
  font-family: 'Open Sans', sans-serif;
  font-weight: 300;
  font-size: 16px;
  line-height: 56px;
  color: #000;
}
.modal-close {
  font-size: 19.600px;
  font-weight: 700;
  color: #c8c8c8;
  line-height: 42px;
}
.modal-body {
  padding: 0 15px;
}
.modal-body h2 {
  margin: 26px 0 0;
  height: 36px;
  font-family: 'Open Sans', sans-serif;
  font-weight: 300;
  font-size: 22px;
  line-height: 36px;
  letter-spacing: -0.15px;
  color: #000;
}
.field {
  margin-top: 13px;
  height: 30px;
  display: flex;
  align-items: center;
}
.field-select {
  margin-top: 20px;
}
.field label {
  width: 180px;
  flex: none;
  font-size: 14px;
}
.field input,
.field select {
  width: 220px;
  height: 30px;
  box-sizing: border-box;
  border: 1px solid #ddd;
  border-radius: 0;
  background: #fff;
  color: #555;
  font: 14px 'Liberation Sans', sans-serif;
  padding: 0 6px;
  outline: none;
  appearance: none;
}
.field select {
  padding-left: 10px;
}
.select-wrap {
  position: relative;
  width: 220px;
  height: 30px;
}
.select-arrow {
  position: absolute;
  right: 1px;
  top: 1px;
  width: 16px;
  height: 26px;
  border: 1px solid #a8a8a8;
  background: linear-gradient(#f4f4f4, #dcdcdc);
  display: flex;
  align-items: center;
  justify-content: center;
}
.modal-body hr {
  margin: 20px 0 0;
  border: 0;
  border-top: 1px solid #e5e5e5;
}
.update-btn {
  display: block;
  margin: 29px 0 0 180px;
  width: 115px;
  height: 34px;
  border: 0;
  padding: 0;
  background: #666;
  color: #fff;
  font: 14px 'Liberation Sans', sans-serif;
}

/* taskbar */
.taskbar {
  height: 40px;
  flex: none;
  background: #0b0b0b;
  display: flex;
  align-items: stretch;
  color: #ddd;
}
.start {
  width: 48px;
  display: flex;
  align-items: center;
  justify-content: center;
}
.cortana {
  width: 320px;
  background: #3f3f3f;
  color: #a8a8a8;
  font-family: 'Open Sans', sans-serif;
  font-size: 14px;
  line-height: 40px;
  padding-left: 12px;
  box-sizing: border-box;
  letter-spacing: 0.1px;
}
.taskview {
  width: 48px;
  display: flex;
  align-items: center;
  justify-content: center;
}
.apps {
  display: flex;
  margin-left: 2px;
  gap: 1px;
}
.app {
  width: 48px;
  height: 40px;
  box-sizing: border-box;
  display: flex;
  align-items: center;
  justify-content: center;
  position: relative;
}
.app-on::after {
  content: '';
  position: absolute;
  left: 4px;
  right: 4px;
  bottom: 0;
  height: 2px;
  background: #16b893;
}
.app-current {
  background: #2a2a2a;
}
.app-current::after {
  left: 0;
  right: 0;
}
.hp {
  width: 24px;
  height: 24px;
  border-radius: 50%;
  background: #fff;
  color: #0b0b0b;
  font: italic 700 14px/24px 'Liberation Serif', serif;
  text-align: center;
}
.tray {
  flex: 1;
  display: flex;
  align-items: center;
  justify-content: flex-end;
  padding-right: 12px;
}
.tray-batt { margin-left: 14px; }
.tray-wifi { margin-left: 12px; }
.tray-vol { margin-left: 9px; }
.tray-note { margin-left: 12px; }
.tray-lang {
  margin-left: 11px;
  font-family: 'Open Sans', sans-serif;
  font-size: 11px;
}
.clock {
  margin-left: 14px;
  display: flex;
  flex-direction: column;
  align-items: center;
  width: 66px;
  font-family: 'Open Sans', sans-serif;
  font-size: 11.500px;
  letter-spacing: -0.3px;
  line-height: 18px;
}
</style>
